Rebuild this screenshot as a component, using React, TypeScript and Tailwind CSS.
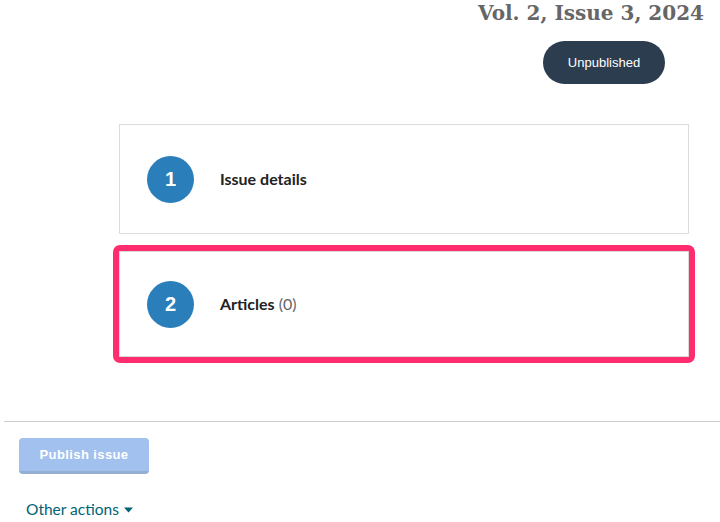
import { ReactNode } from 'react'

function Step({ num, children }: { num: number; children: ReactNode }) {
  return (
    <div className="flex items-center h-full pl-[27px]">
      <div className="w-[47px] h-[47px] rounded-full bg-[#2a7fba] text-white flex items-center justify-center font-['Liberation_Sans',sans-serif] font-bold text-[20px]">
        {num}
      </div>
      <div className="ml-[26px] text-[16px] text-[#222] font-['Lato',sans-serif]">{children}</div>
    </div>
  )
}

export default function App() {
  return (
    <div className="w-[720px] h-[522px] bg-white overflow-hidden relative font-['Lato',sans-serif]">
      <div className="flex flex-col items-end pr-[16px]">
        <h1 className="font-['DejaVu_Serif',serif] font-bold text-[20px] leading-[24px] text-[#666] mt-[1px]">
          Vol. 2, Issue 3, 2024
        </h1>
        <div className="mt-[16px] mr-[39px] w-[122px] h-[43px] rounded-full bg-[#2d3d50] text-white text-[13px] font-['Liberation_Sans',sans-serif] flex items-center justify-center">
          Unpublished
        </div>
      </div>

      <div className="ml-[119px] w-[570px] mt-[40px]">
        <div className="h-[110px] border border-[#dcdcdc]">
          <Step num={1}>
            <span className="font-bold">Issue details</span>
          </Step>
        </div>
        <div className="mt-[17px] h-[106px] border border-[#dcdcdc] outline-[6px] outline-solid outline-[#ff2d6d] rounded-[1px]">
          <Step num={2}>
            <span className="font-bold">Articles</span>{' '}
            <span className="text-[#666]">(0)</span>
          </Step>
        </div>
      </div>

      <div className="ml-[4px] mt-[64px] border-t border-[#cccccc]" />

      <div className="pl-[19px] pt-[16px]">
        <button className="w-[130px] h-[36px] rounded-[4px] bg-[#a2c1ee] border-b-[3px] border-[#93add3] text-white text-[13px] font-bold font-['Liberation_Sans',sans-serif] tracking-[0.4px]">
          Publish issue
        </button>
        <div className="mt-[24px] ml-[7px] flex items-center text-[15.5px] text-[#006177]">
          Other actions
          <svg className="ml-[5px]" width="9" height="6" viewBox="0 0 9 6">
            <path d="M0 0.5 L9 0.5 L4.5 5.5 Z" fill="#006177" />
          </svg>
        </div>
      </div>
    </div>
  )
}
